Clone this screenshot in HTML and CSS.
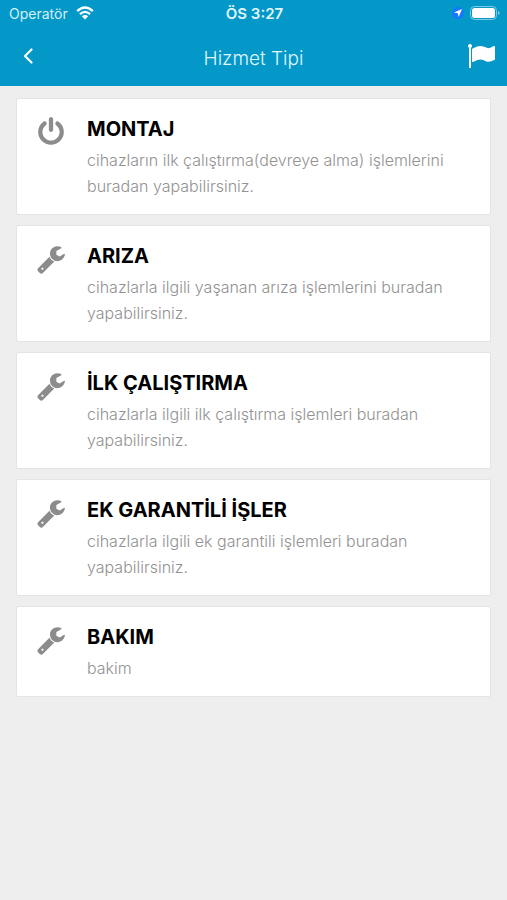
FILE: index.html
```html
<!DOCTYPE html>
<html lang="tr">
<head>
<meta charset="utf-8">
<meta name="viewport" content="width=device-width, initial-scale=1">
<title>Hizmet Tipi</title>
<link rel="stylesheet" href="styles.css">
</head>
<body>
<svg class="sprite" aria-hidden="true">
  <symbol id="wrench" viewBox="0 0 1792 1792">
    <path d="M448 1472q0-26-19-45t-45-19-45 19-19 45 19 45 45 19 45-19 19-45zm644-420l-682 682q-37 37-90 37-52 0-91-37l-106-108q-38-36-38-90 0-53 38-91l681-681q39 98 114.500 173.500t173.500 114.500zm634-435q0 39-23 106-47 134-164.500 217.500t-258.500 83.500q-185 0-316.500-131.500t-131.500-316.500 131.500-316.500 316.500-131.500q58 0 121.500 16.500t107.500 46.500q16 11 16 28t-16 28l-293 169v224l193 107q5-3 79-48.500t135.500-81 70.500-35.500q15 0 23.500 10t8.500 25z"/>
  </symbol>
  <symbol id="power" viewBox="0 0 1792 1792">
    <path d="M1664 896q0 156-61 298t-164 245-245 164-298 61-298-61-245-164-164-245-61-298q0-182 80.500-343t226.500-270q43-32 95.500-25t83.500 50q32 42 24.500 94.500t-49.500 84.500q-98 74-151.500 181t-53.500 228q0 104 40.500 198.500t109.500 163.500 163.500 109.500 198.500 40.500 198.500-40.500 163.500-109.500 109.500-163.500 40.500-198.500q0-121-53.500-228t-151.500-181q-42-32-49.500-84.500t24.500-94.500q31-43 84-50t95 25q146 109 226.500 270t80.500 343zm-640-768v640q0 52-38 90t-90 38-90-38-38-90v-640q0-52 38-90t90-38 90 38 38 90z"/>
  </symbol>
</svg>

<header class="top">
  <div class="status">
    <div class="carrier">
      <span>Operatör</span>
      <svg class="wifi" viewBox="0 0 18 14" aria-hidden="true">
        <path d="M1.200 5.200Q9-2.200 16.800 5.200M4 8.200Q9 3.600 14 8.200" fill="none" stroke="currentColor" stroke-width="2.300"/>
        <path d="M9 13.600L5.800 10.300Q9 7.600 12.200 10.300Z" fill="currentColor"/>
      </svg>
    </div>
    <time class="clock">ÖS 3:27</time>
    <div class="indicators">
      <svg class="location" viewBox="0 0 12 12" aria-hidden="true">
        <circle cx="6" cy="6" r="6" fill="#1479ff"/>
        <path d="M10 2L6.600 10L5.800 6.300L2 5.600Z" fill="#fff"/>
      </svg>
      <svg class="battery" viewBox="0 0 30 14" aria-hidden="true">
        <rect x="0.500" y="0.500" width="26" height="13" rx="4" fill="none" stroke="#7fcbe3"/>
        <rect x="2" y="2" width="23" height="10" rx="2.500" fill="#fff"/>
        <path d="M28 5Q29.600 5.500 29.600 7T28 9Z" fill="#7fcbe3"/>
      </svg>
    </div>
  </div>
  <nav class="bar">
    <button class="icon-button" type="button" aria-label="Geri">
      <svg class="back" viewBox="0 0 10 16" aria-hidden="true">
        <path d="M8.500 1.500L2 8L8.500 14.500" fill="none" stroke="currentColor" stroke-width="2.200" stroke-linecap="round" stroke-linejoin="round"/>
      </svg>
    </button>
    <h1 class="heading">Hizmet Tipi</h1>
    <button class="icon-button flag-button" type="button" aria-label="Bayrak">
      <svg class="flag" viewBox="0 0 1792 1792" aria-hidden="true">
        <path fill="currentColor" d="M320 256q0 72-64 110v1266q0 13-9.500 22.500t-22.500 9.500h-64q-13 0-22.500-9.500t-9.500-22.500v-1266q-64-38-64-110 0-53 37.500-90.500t90.500-37.500 90.500 37.500 37.500 90.500zm1472 64v763q0 25-12.500 38.500t-39.500 27.500q-215 116-369 116-61 0-123.500-22t-108.500-48-115.500-48-142.500-22q-192 0-464 146-17 9-33 9-26 0-45-19t-19-45v-742q0-32 31-55 21-14 79-43 236-120 421-120 107 0 200 29t219 88q38 19 88 19 54 0 117.500-21t110-47 88-47 54.500-21q26 0 45 19t19 45z"/>
      </svg>
    </button>
  </nav>
</header>

<main class="list">
  <a class="card" href="#montaj">
    <svg class="icon" aria-hidden="true"><use href="#power"/></svg>
    <div class="text">
      <h2 class="title">MONTAJ</h2>
      <p class="desc">cihazların ilk çalıştırma(devreye alma) işlemlerini buradan yapabilirsiniz.</p>
    </div>
  </a>
  <a class="card" href="#ariza">
    <svg class="icon" aria-hidden="true"><use href="#wrench"/></svg>
    <div class="text">
      <h2 class="title">ARIZA</h2>
      <p class="desc">cihazlarla ilgili yaşanan arıza işlemlerini buradan yapabilirsiniz.</p>
    </div>
  </a>
  <a class="card" href="#ilk-calistirma">
    <svg class="icon" aria-hidden="true"><use href="#wrench"/></svg>
    <div class="text">
      <h2 class="title">İLK ÇALIŞTIRMA</h2>
      <p class="desc">cihazlarla i&#775;lgili i&#775;lk çalıştırma işlemleri buradan yapabilirsiniz.</p>
    </div>
  </a>
  <a class="card" href="#ek-garanti">
    <svg class="icon" aria-hidden="true"><use href="#wrench"/></svg>
    <div class="text">
      <h2 class="title">EK GARANTİLİ İŞLER</h2>
      <p class="desc">cihazlarla i&#775;lgili ek garantili işlemleri buradan yapabilirsiniz.</p>
    </div>
  </a>
  <a class="card" href="#bakim">
    <svg class="icon" aria-hidden="true"><use href="#wrench"/></svg>
    <div class="text">
      <h2 class="title">BAKIM</h2>
      <p class="desc">bakim</p>
    </div>
  </a>
</main>
</body>
</html>
```
FILE: styles.css
```css
* {
  box-sizing: border-box;
}

body {
  margin: 0;
  background: #eeeeee;
  font-family: Inter, "Liberation Sans", sans-serif;
}

.sprite {
  display: none;
}

.top {
  background: #0398c8;
  color: #ffffff;
}

.status {
  display: grid;
  grid-template-columns: 1fr auto 1fr;
  align-items: center;
  height: 26px;
  padding: 0 7px 0 9px;
  font-size: 14px;
}

.carrier {
  display: flex;
  align-items: center;
  gap: 8px;
  color: #d3f1fa;
}

.wifi {
  width: 18px;
  height: 14px;
  color: #ffffff;
}

.clock {
  font-size: 15px;
  font-weight: 600;
  color: #e0f6fc;
}

.indicators {
  display: flex;
  align-items: center;
  justify-content: flex-end;
  gap: 6px;
}

.location {
  width: 12px;
  height: 12px;
}

.battery {
  width: 30px;
  height: 14px;
}

.bar {
  display: grid;
  grid-template-columns: 56px 1fr 56px;
  align-items: center;
  height: 60px;
}

.icon-button {
  display: flex;
  align-items: center;
  justify-content: center;
  height: 60px;
  padding: 0;
  border: 0;
  background: none;
  color: #ffffff;
}

.flag-button {
  justify-content: flex-end;
  padding-right: 12px;
}

.back {
  width: 10px;
  height: 16px;
}

.flag {
  width: 28px;
  height: 28px;
}

.heading {
  margin: 0;
  padding-top: 6px;
  font-size: 19px;
  font-weight: 300;
  line-height: 24px;
  text-align: center;
  color: #e0f6fc;
}

.list {
  display: flex;
  flex-direction: column;
  gap: 10px;
  padding: 12px 16px;
}

.card {
  display: flex;
  gap: 21px;
  padding: 17px 19px 15px;
  border: 1px solid #e4e4e4;
  border-radius: 2px;
  background: #ffffff;
  text-decoration: none;
}

.icon {
  flex: none;
  width: 30px;
  height: 30px;
  margin-top: 1px;
  fill: #8c8c8c;
}

.text {
  flex: 1;
}

.title {
  margin: 0 0 5px;
  font-size: 20px;
  font-weight: 700;
  line-height: 26px;
  color: #000000;
}

.desc {
  margin: 0;
  font-size: 16px;
  font-weight: 300;
  line-height: 26px;
  color: #929292;
}
```
